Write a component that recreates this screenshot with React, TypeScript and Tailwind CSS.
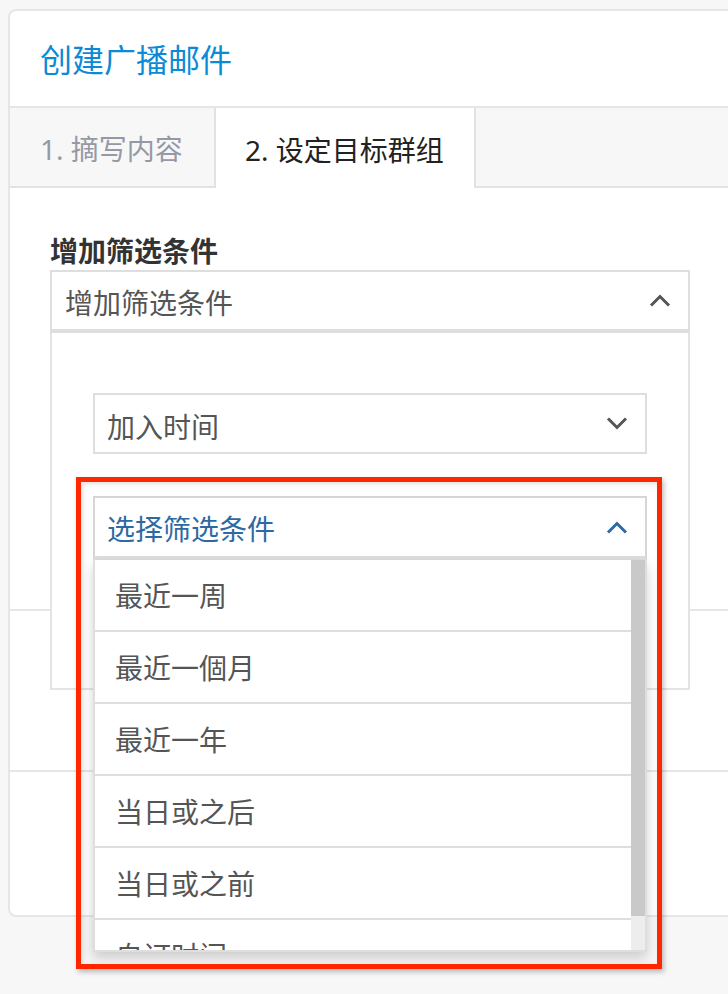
import React from "react";

function Chevron({ up, className }: { up?: boolean; className: string }) {
  return (
    <svg width="22" height="13" viewBox="0 0 22 13" className={className}>
      <polyline
        points={up ? "2,11.5 11,2.5 20,11.5" : "2,1.5 11,10.5 20,1.5"}
        fill="none"
        stroke="currentColor"
        strokeWidth="3"
      />
    </svg>
  );
}

const options = ["最近一周", "最近一個月", "最近一年", "当日或之后", "当日或之前", "自订时间"];

export default function App() {
  return (
    <div className="relative h-[994px] w-[728px] overflow-hidden bg-[#f7f7f7] pl-[8px] pt-[9px] font-['Noto_Sans','Noto_Sans_CJK_SC',sans-serif]">
      <div className="flex h-[908px] w-[760px] flex-col rounded-l-[8px] border-2 border-[#e6e6e6] bg-white">
        {/* header */}
        <div className="flex h-[97px] shrink-0 items-center border-b-2 border-[#e6e6e6] pl-[30px] pt-[2px]">
          <h1 className="text-[32px] leading-none text-[#0b8bd6]">创建广播邮件</h1>
        </div>

        {/* tabs */}
        <div className="flex h-[80px] shrink-0 border-b-2 border-[#e2e2e2] bg-[#f7f7f7]">
          <div className="flex w-[204px] items-center pl-[30px] pt-[4px] text-[28px] leading-none text-[#9599a5]">
            1. 摘写内容
          </div>
          <div className="-mb-[2px] flex w-[262px] items-center border-x-2 border-[#e2e2e2] bg-white pl-[29px] pt-[4px] text-[28px] leading-none text-[#222]">
            2. 设定目标群组
          </div>
        </div>

        {/* filter section */}
        <div className="h-[423px] shrink-0 border-b-2 border-[#e6e6e6] px-[40px] pt-[46px]">
          <label className="block text-[28px] font-bold leading-[34px] text-[#333]">增加筛选条件</label>
          <div className="relative mt-[2px] w-[640px]">
            <div className="flex h-[63px] items-center justify-between border-2 border-b-4 border-[#dedede] pl-[13px] pr-[17px]">
              <span className="pt-[4px] text-[28px] leading-none text-[#555]">增加筛选条件</span>
              <Chevron up className="text-[#555]" />
            </div>

            {/* open panel */}
            <div className="absolute left-0 top-full z-10 h-[357px] w-[640px] border-2 border-t-0 border-[#e4e4e4] bg-white pl-[41px] pt-[60px]">
              <div className="flex h-[61px] w-[554px] items-center justify-between border-2 border-[#dedede] pl-[12px] pr-[17px]">
                <span className="pt-[6px] text-[28px] leading-none text-[#555]">加入时间</span>
                <Chevron className="text-[#555]" />
              </div>

              <div className="relative mt-[42px] w-[554px]">
                <div className="flex h-[64px] items-center justify-between border-2 border-b-4 border-[#d6d6d6] border-b-[#dedede] pl-[12px] pr-[17px]">
                  <span className="pt-[4px] text-[28px] leading-none text-[#2d6aa3]">选择筛选条件</span>
                  <Chevron up className="text-[#2d6aa3]" />
                </div>

                {/* option list */}
                <div className="absolute left-0 top-full flex h-[392px] w-[554px] overflow-hidden border-2 border-t-0 border-[#dedede] bg-white shadow-[0_6px_12px_rgba(0,0,0,0.175)]">
                  <div className="flex-1">
                    {options.map((o) => (
                      <div
                        key={o}
                        className="flex h-[72px] items-center border-b-2 border-[#dedede] pl-[20px] pt-[2px] text-[28px] leading-none text-[#555]"
                      >
                        {o}
                      </div>
                    ))}
                  </div>
                  <div className="flex w-[14px] flex-col bg-[#ededed]">
                    <div className="h-[356px] bg-[#c9c9c9]" />
                  </div>
                </div>
              </div>
            </div>
          </div>
        </div>

        <div className="h-[161px] shrink-0 border-b-2 border-[#e6e6e6]" />
        <div className="flex-1" />
      </div>

      {/* highlight box */}
      <div className="pointer-events-none absolute left-[76px] top-[477px] z-20 h-[492px] w-[586px] border-[5px] border-[#ff2600] shadow-[2px_3px_5px_rgba(0,0,0,0.25),inset_2px_2px_5px_rgba(0,0,0,0.12)]" />
    </div>
  );
}
